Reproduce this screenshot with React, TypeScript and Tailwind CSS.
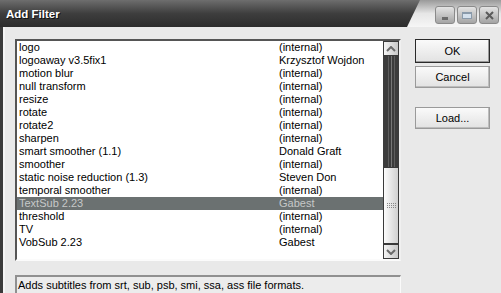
import React from "react";

const rows: [string, string][] = [
  ["logo", "(internal)"],
  ["logoaway v3.5fix1", "Krzysztof Wojdon"],
  ["motion blur", "(internal)"],
  ["null transform", "(internal)"],
  ["resize", "(internal)"],
  ["rotate", "(internal)"],
  ["rotate2", "(internal)"],
  ["sharpen", "(internal)"],
  ["smart smoother (1.1)", "Donald Graft"],
  ["smoother", "(internal)"],
  ["static noise reduction (1.3)", "Steven Don"],
  ["temporal smoother", "(internal)"],
  ["TextSub 2.23", "Gabest"],
  ["threshold", "(internal)"],
  ["TV", "(internal)"],
  ["VobSub 2.23", "Gabest"],
];

function TitleBtn({ children }: { children: React.ReactNode }) {
  return (
    <div className="w-[20px] h-[18px] rounded-[3px] border border-[#8a8a8a] bg-gradient-to-b from-[#e4e4e4] via-[#c4c4c4] to-[#a4a4a4] flex items-center justify-center">
      {children}
    </div>
  );
}

function Btn({ label, def }: { label: string; def?: boolean }) {
  return (
    <div
      className={
        "w-[75px] flex items-center justify-center bg-gradient-to-b from-[#fafafa] to-[#e2e2e2] text-black " +
        (def
          ? "h-[24px] border border-[#2a2a2a] shadow-[inset_-1px_-1px_0_#9a9a9a]"
          : "h-[22px] border border-[#9a9a9a] shadow-[inset_-1px_-1px_0_#bdbdbd]")
      }
    >
      {label}
    </div>
  );
}

function ArrowBtn({ up }: { up?: boolean }) {
  return (
    <div className="h-[15px] w-[16px] border border-[#3a3a3a] bg-gradient-to-r from-[#f4f4f4] to-[#c8c8c8] flex items-center justify-center">
      <svg width="10" height="6" viewBox="0 0 10 6">
        <path
          d={up ? "M1 5 L5 1 L9 5" : "M1 1 L5 5 L9 1"}
          fill="none"
          stroke="#6a6a6a"
          strokeWidth="2"
        />
      </svg>
    </div>
  );
}

export default function App() {
  return (
    <div
      className="w-[501px] h-[293px] overflow-hidden bg-[#e9e9e9] flex flex-col text-[11px] text-black"
      style={{ fontFamily: '"Liberation Sans", Arial, sans-serif' }}
    >
      {/* title bar */}
      <div className="h-[27px] flex bg-gradient-to-b from-[#6e6e6e] via-[#3e3e3e] to-[#2c2c2c] shrink-0">
        <div className="flex-1 flex items-center pl-[6px] pt-[2px] text-white font-bold text-[11.5px] [text-shadow:1px_1px_0_#111]">
          Add Filter
        </div>
        <div className="w-[94px] flex items-center justify-end gap-[2px] pr-[2px] pt-[3px] bg-gradient-to-b from-[#9a9a9a] via-[#e6e6e6] to-[#f6f6f6] [clip-path:polygon(13px_0,100%_0,100%_100%,0_100%)]">
          <TitleBtn>
            <div className="w-[6px] h-[3px] bg-[#6a6a6a] mt-[7px]" />
          </TitleBtn>
          <TitleBtn>
            <div className="w-[10px] h-[7px] border border-[#8a9aaa] bg-[#d4e0ec] border-t-2" />
          </TitleBtn>
          <TitleBtn>
            <svg width="9" height="9" viewBox="0 0 9 9">
              <path d="M1 1 L8 8 M8 1 L1 8" stroke="#5a5a5a" strokeWidth="2" />
            </svg>
          </TitleBtn>
        </div>
      </div>

      {/* body */}
      <div className="flex-1 flex">
        <div className="w-[3px] bg-[#3a3a3a]" />
        <div className="w-[2px] bg-[#f4f4f4]" />
        <div className="flex-1 flex flex-col pl-[10px] pt-[12px]">
          <div className="flex">
            {/* listbox */}
            <div className="w-[386px] h-[222px] border-t-2 border-l-2 border-t-[#555] border-l-[#555] border-b-2 border-r-2 border-b-[#fbfbfb] border-r-[#f0f0f0] bg-white flex">
              <div className="flex-1 flex flex-col">
                {rows.map(([a, b], i) => (
                  <div
                    key={i}
                    className={
                      "h-[13px] leading-[13px] flex " +
                      (i === 12 ? "bg-[#6b7171] text-[#c6c8c8]" : "")
                    }
                  >
                    <div className="w-[262px] pl-[2px] whitespace-nowrap">{a}</div>
                    <div className="whitespace-nowrap">{b}</div>
                  </div>
                ))}
              </div>
              {/* scrollbar */}
              <div className="w-[16px] flex flex-col">
                <ArrowBtn up />
                <div className="h-[111px] bg-[#3c3c3c] flex justify-center gap-[2px]">
                  <div className="w-px bg-[#5e5e5e]" />
                  <div className="w-px bg-[#777]" />
                  <div className="w-px bg-[#5e5e5e]" />
                </div>
                <div className="h-[77px] border border-[#3a3a3a] bg-gradient-to-r from-[#fcfcfc] to-[#d0d0d0] flex flex-col items-center justify-center gap-[1px]">
                  <div className="w-[9px] h-px border-t border-dotted border-[#888]" />
                  <div className="w-[9px] h-px border-t border-dotted border-[#888]" />
                  <div className="w-[9px] h-px border-t border-dotted border-[#888]" />
                </div>
                <ArrowBtn />
              </div>
            </div>
            {/* buttons */}
            <div className="pl-[14px] flex flex-col">
              <Btn label="OK" def />
              <div className="h-[3px]" />
              <Btn label="Cancel" />
              <div className="h-[19px]" />
              <Btn label="Load..." />
            </div>
          </div>
          <div className="h-[14px]" />
          {/* status */}
          <div className="w-[386px] flex-1 border-t-2 border-l-2 border-t-[#909090] border-l-[#909090] border-r border-r-[#fafafa] bg-[#ececec] pl-[1px] pt-[1px] leading-[14px] whitespace-nowrap">
            Adds subtitles from srt, sub, psb, smi, ssa, ass file formats.
          </div>
        </div>
      </div>
    </div>
  );
}
